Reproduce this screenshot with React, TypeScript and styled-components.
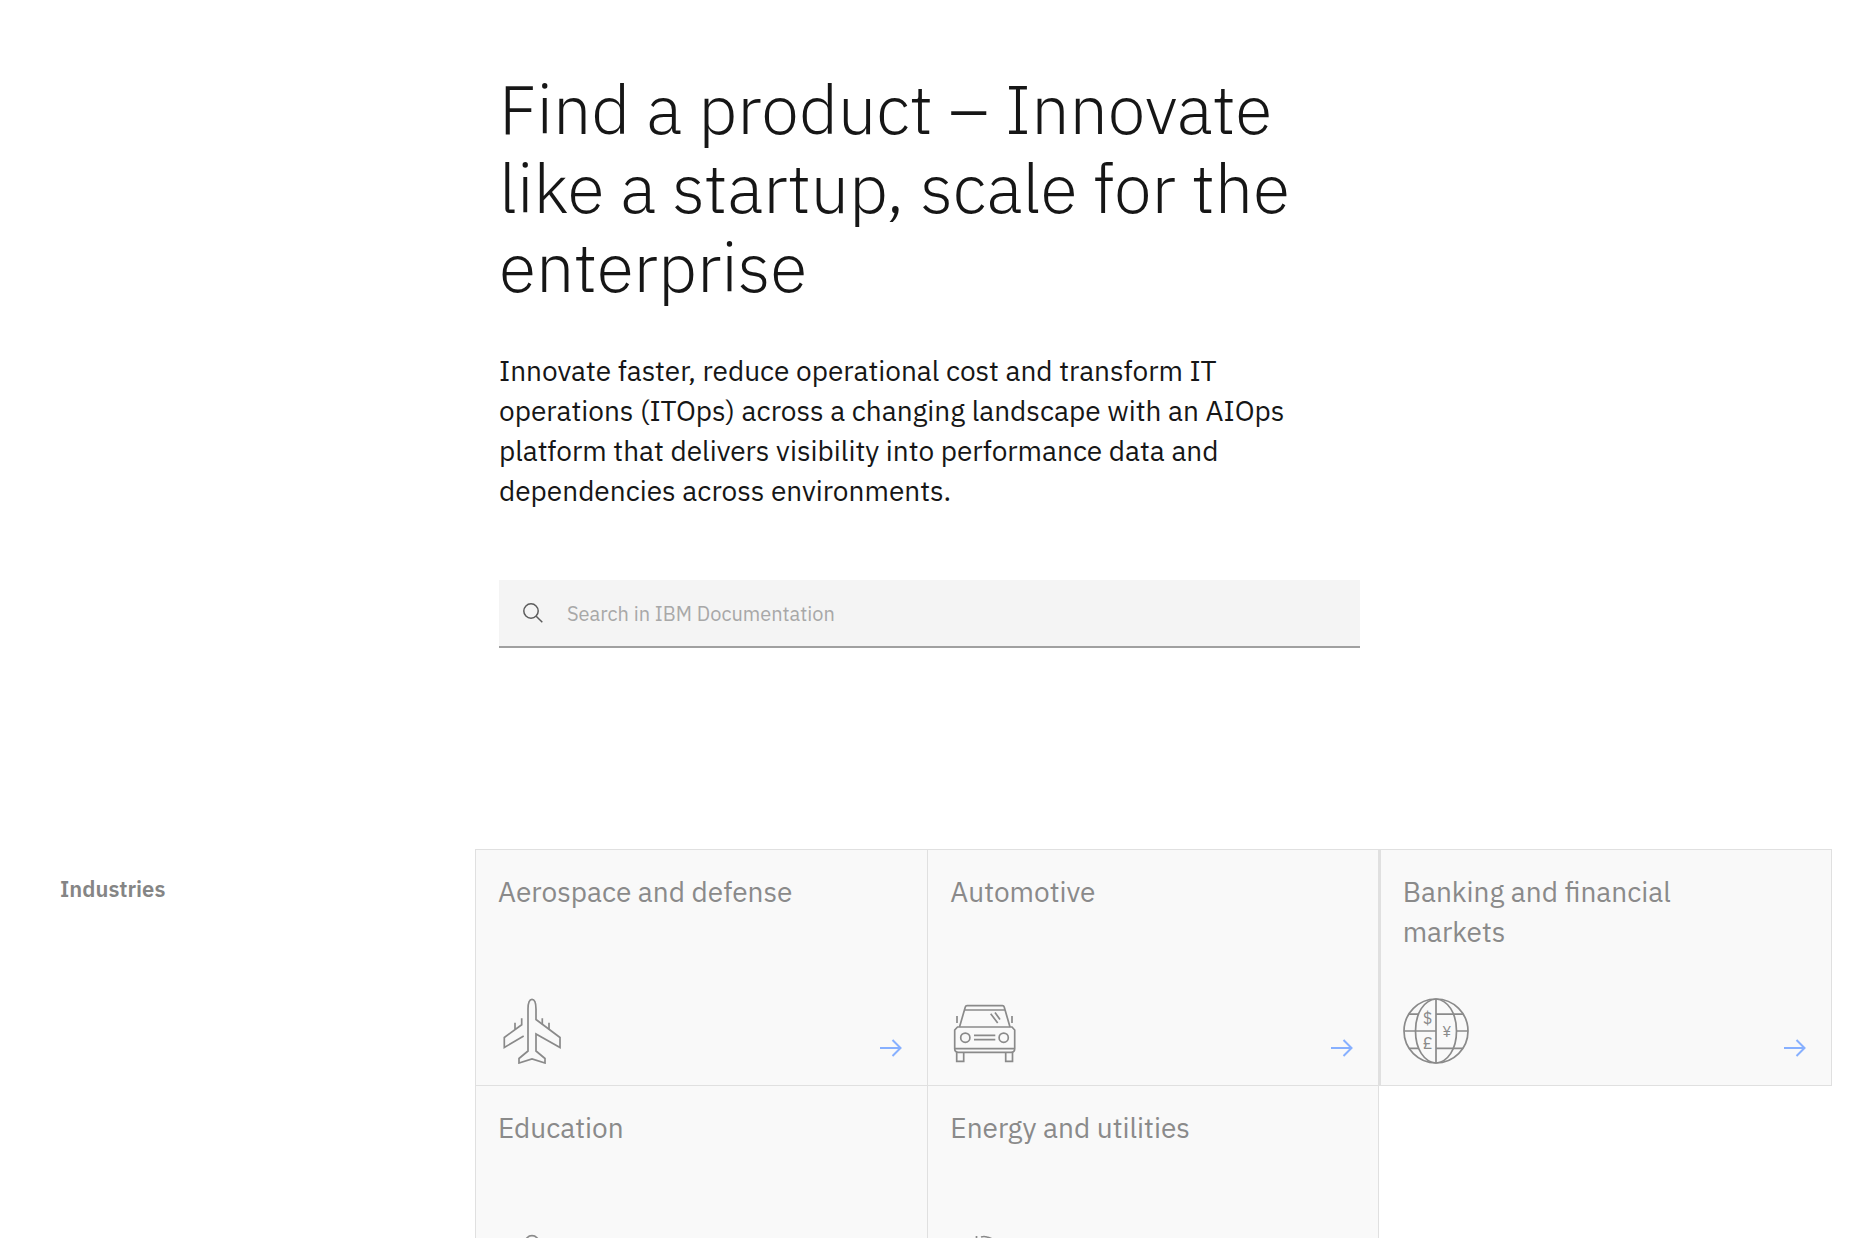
import React from "react";
import styled, { createGlobalStyle } from "styled-components";

const GlobalStyle = createGlobalStyle`
  *, *::before, *::after { box-sizing: border-box; }
  html { background: #ffffff; }
  body {
    margin: 0;
    color: #161616;
    font-family: "IBM Plex Sans", Roboto, "Noto Sans", sans-serif;
  }
`;

const Page = styled.main`
  height: 100vh;
  overflow: hidden;
  display: flex;
  flex-direction: column;
  padding: 69px 24px 0 0;
`;

const Hero = styled.header`
  margin-left: 499px;
  max-width: 861px;
`;

const Title = styled.h1`
  margin: 0 0 45px;
  max-width: 810px;
  font-size: 68px;
  line-height: 79px;
  font-weight: 300;
`;

const Lead = styled.p`
  margin: 0 0 69px;
  max-width: 810px;
  font-size: 28px;
  line-height: 40px;
`;

const SearchBox = styled.label`
  display: flex;
  align-items: center;
  gap: 24px;
  height: 68px;
  padding: 0 24px;
  background: #f4f4f4;
  border-bottom: 2px solid #a0a0a0;
`;

const SearchInput = styled.input`
  flex: 1;
  min-width: 0;
  height: 100%;
  padding: 0;
  border: 0;
  outline: 0;
  background: transparent;
  color: #161616;
  font: inherit;
  font-size: 20px;
  &::placeholder { color: #a8a8a8; opacity: 1; }
`;

const Section = styled.section`
  display: grid;
  grid-template-columns: 475px minmax(0, 1fr);
  align-items: start;
  margin-top: 201px;
`;

const SectionTitle = styled.h2`
  margin: 0;
  padding: 24px 0 0 60px;
  font-size: 22px;
  line-height: 32px;
  font-weight: 600;
  color: #858585;
`;

const TileGrid = styled.ul`
  display: grid;
  grid-template-columns: minmax(0, 151fr) minmax(0, 150fr) minmax(0, 151fr);
  grid-auto-rows: 236px;
  margin: 0;
  padding: 0;
  list-style: none;
  border-top: 1px solid #e0e0e0;
`;

const TileItem = styled.li`
  display: flex;
  border-right: 1px solid #e0e0e0;
  border-bottom: 1px solid #e0e0e0;
  background: #f9f9f9;
  &:nth-child(3n + 1) { border-left: 1px solid #e0e0e0; }
  &:nth-child(3n) { border-left: 2px solid #e0e0e0; }
`;

const Tile = styled.a`
  flex: 1;
  display: flex;
  flex-direction: column;
  justify-content: space-between;
  padding: 22px 25px 21px 22px;
  color: #8a8a8a;
  text-decoration: none;
`;

const TileLabel = styled.span`
  max-width: 320px;
  font-size: 28px;
  line-height: 40px;
`;

const TileFooter = styled.span`
  display: flex;
  justify-content: space-between;
  align-items: flex-end;
`;

const Pictogram = styled.svg`
  width: 66px;
  height: 66px;
  fill: none;
  stroke: #8a8a8a;
  stroke-width: 1.7;
`;

const Currency = styled.text<{ $size: number }>`
  fill: #8a8a8a;
  stroke: none;
  font-size: ${(p) => p.$size}px;
  text-anchor: middle;
`;

const Arrow = styled.svg`
  width: 22px;
  height: 18px;
  margin-bottom: 7px;
  fill: none;
  stroke: #87b0ff;
  stroke-width: 2;
`;

const SearchGlyph = styled.svg`
  width: 20px;
  height: 20px;
  fill: none;
  stroke: #5c5c5c;
  stroke-width: 1.5;
`;

const Airplane = () => (
  <Pictogram viewBox="-1 0 66 66" aria-hidden="true">
    <path d="M29 53V11C29 4.500 30.500 1.300 33 1.300S37 4.500 37 11V21.500L61 39.500V49.500L37 36V53L46 60.500V65L33 61L20 65V60.500Z" fill="none" />
    <path d="M22.700 20.300V26.700L5.300 39.500V49.500L24.700 38M16 24.700V31.500M43.300 20.300V26.200M50 24.700V31.300" />
  </Pictogram>
);

const Car = () => (
  <Pictogram viewBox="-1 0 66 66" aria-hidden="true">
    <path d="M8.500 29L14.300 9Q14.700 7.700 16 7.700H51.500Q52.800 7.700 53.200 9L59 29M13.500 12H54M6 18V25M61 18V25" />
    <path d="M6.500 29H61L63.700 32V50.700Q63.700 54.300 60 54.300H7.500Q3.700 54.300 3.700 50.700V32ZM3.700 50.700H63.700" />
    <path d="M5.700 54.300V63.300H12.700V54.300M54.700 54.300V63.300H61.500V54.300M23 37.300H44.300M23 41.700H44.300M39.700 15.700L46.700 25M44 14.500L49 21.500" />
    <circle cx="14.300" cy="39.700" r="4.600" />
    <circle cx="52.700" cy="39.700" r="4.600" />
  </Pictogram>
);

const GlobeCurrency = () => (
  <Pictogram viewBox="0 0 66 66" aria-hidden="true">
    <circle cx="33" cy="33" r="32" />
    <path d="M33 1C21 2 12.500 15 12.500 33S21 64 33 65M33 1C45 2 53.500 15 53.500 33S45 64 33 65M33 1V65" />
    <path d="M6 16.200H15.500M33 16.200H60M1 33H33M53.500 33H65M6 50.300H15.500M33 50.300H60" />
    <Currency $size={16} x="24.500" y="26">$</Currency>
    <Currency $size={17} x="24.500" y="50.500">£</Currency>
    <Currency $size={15} x="43.700" y="39">¥</Currency>
  </Pictogram>
);

const Graduate = () => (
  <Pictogram viewBox="-1 0 66 66" aria-hidden="true">
    <circle cx="33" cy="8.700" r="7" />
    <path d="M5 24L33 30L61 24V56L33 64L5 56ZM33 30V64M20 27V22Q20 17 33 17T46 22V27" />
  </Pictogram>
);

const Bulb = () => (
  <Pictogram viewBox="-1 0 66 66" aria-hidden="true">
    <path d="M25.500 2V8M30 3Q33 2 36 3Q48 6 48 18Q48 28 40 34V46H26V34Q18 28 18 18M26 52H40M28 58H38" />
  </Pictogram>
);

const industries = [
  { name: "Aerospace and defense", Icon: Airplane },
  { name: "Automotive", Icon: Car },
  { name: "Banking and financial markets", Icon: GlobeCurrency },
  { name: "Education", Icon: Graduate },
  { name: "Energy and utilities", Icon: Bulb },
];

export default function App() {
  return (
    <>
      <GlobalStyle />
      <Page>
        <Hero>
          <Title>Find a product – Innovate like a startup, scale for the enterprise</Title>
          <Lead>
            Innovate faster, reduce operational cost and transform IT operations (ITOps) across a
            changing landscape with an AIOps platform that delivers visibility into performance data
            and dependencies across environments.
          </Lead>
          <SearchBox>
            <SearchGlyph viewBox="0 0 20 20" aria-hidden="true">
              <circle cx="8" cy="8" r="7.200" />
              <path d="M13.200 13.200L19.300 19.300" />
            </SearchGlyph>
            <SearchInput
              type="search"
              aria-label="Search in IBM Documentation"
              placeholder="Search in IBM Documentation"
            />
          </SearchBox>
        </Hero>
        <Section aria-labelledby="industries">
          <SectionTitle id="industries">Industries</SectionTitle>
          <TileGrid>
            {industries.map(({ name, Icon }) => (
              <TileItem key={name}>
                <Tile href="#">
                  <TileLabel>{name}</TileLabel>
                  <TileFooter>
                    <Icon />
                    <Arrow viewBox="0 0 22 18" aria-hidden="true">
                      <path d="M0 9H20.500M12.500 1L20.500 9L12.500 17" />
                    </Arrow>
                  </TileFooter>
                </Tile>
              </TileItem>
            ))}
          </TileGrid>
        </Section>
      </Page>
    </>
  );
}
